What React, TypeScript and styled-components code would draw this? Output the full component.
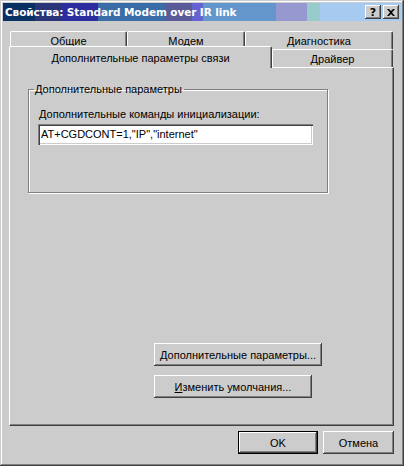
import styled, { createGlobalStyle } from "styled-components";

const GlobalStyle = createGlobalStyle`
  html, body {
    margin: 0;
    padding: 0;
    background: #cccccc;
  }
  * {
    box-sizing: border-box;
  }
`;

const FACE = "#cccccc";
const SHADOW = "#808080";
const DARK = "#404040";

const Window = styled.div`
  width: 404px;
  height: 466px;
  background: ${FACE};
  padding: 3px;
  display: flex;
  flex-direction: column;
  font-family: "Liberation Sans", Arial, sans-serif;
  font-size: 11px;
  color: #000;
  box-shadow: inset -1px -1px ${DARK}, inset 1px 1px ${FACE},
    inset -2px -2px ${SHADOW}, inset 2px 2px #ffffff;
`;

const TitleBar = styled.div`
  height: 18px;
  display: flex;
  align-items: center;
  padding: 0 2px 0 2px;
  background: linear-gradient(
    to right,
    #0a3062 0px 32px,
    #2a3478 32px 59px,
    #2c2c9e 59px 95px,
    #3a6ca8 95px 162px,
    #5a5a98 162px 189px,
    #6464d0 189px 200px,
    #6496cc 200px 273px,
    #9898d0 273px 304px,
    #98cccc 304px 317px,
    #a6caf0 317px
  );
`;

const Title = styled.span`
  flex: 1;
  color: #ffffff;
  font-family: "DejaVu Sans", Verdana, sans-serif;
  font-weight: bold;
  font-size: 10.5px;
  letter-spacing: -0.1px;
  white-space: nowrap;
`;

const CaptionButton = styled.button<{ $gap?: number }>`
  width: 16px;
  height: 14px;
  margin-left: ${(p) => p.$gap ?? 0}px;
  padding: 0;
  border: none;
  background: ${FACE};
  display: flex;
  align-items: center;
  justify-content: center;
  font-family: "DejaVu Sans", sans-serif;
  font-weight: bold;
  font-size: 11px;
  line-height: 1;
  color: #000;
  box-shadow: inset -1px -1px ${DARK}, inset 1px 1px #ffffff,
    inset -2px -2px ${SHADOW};
`;

const Body = styled.div`
  flex: 1;
  display: flex;
  flex-direction: column;
  padding: 10px 7px 0 6px;
`;

const TabRow = styled.div<{ $offset: number }>`
  display: flex;
  align-items: flex-end;
  height: 18px;
  padding-left: ${(p) => p.$offset}px;
`;

const Tab = styled.div<{ $width: number; $active?: boolean }>`
  width: ${(p) => p.$width}px;
  height: ${(p) => (p.$active ? 22 : 18)}px;
  margin-bottom: ${(p) => (p.$active ? -1 : 0)}px;
  ${(p) => (p.$active ? "position: relative; z-index: 2;" : "")}
  background: ${FACE};
  display: flex;
  align-items: center;
  justify-content: center;
  padding-top: ${(p) => (p.$active ? 0 : 1)}px;
  white-space: nowrap;
  border-top-left-radius: 2px;
  border-top-right-radius: 2px;
  border-top: 1px solid #ffffff;
  border-left: 1px solid #ffffff;
  border-right: 1px solid ${DARK};
  box-shadow: inset -1px 0 ${SHADOW};
`;

const Panel = styled.div`
  height: 359px;
  display: flex;
  flex-direction: column;
  padding: 15px 0 0 18px;
  background: ${FACE};
  border-top: 1px solid #ffffff;
  border-left: 1px solid #ffffff;
  border-right: 1px solid ${DARK};
  border-bottom: 1px solid ${DARK};
  box-shadow: inset -1px -1px ${SHADOW};
`;

const GroupBox = styled.fieldset`
  width: 300px;
  height: 110px;
  margin: 0;
  padding: 0 0 0 10px;
  border: 1px solid ${SHADOW};
  box-shadow: 1px 1px #ffffff, inset 1px 1px #ffffff;
`;

const Legend = styled.legend`
  padding: 0 2px 0 1px;
  margin-left: -5px;
  line-height: 12px;
`;

const FieldLabel = styled.div`
  margin-top: 12px;
  line-height: 14px;
`;

const TextField = styled.div`
  width: 275px;
  height: 21px;
  margin-top: 3px;
  margin-left: -1px;
  padding: 4px 0 0 3px;
  background: #ffffff;
  white-space: nowrap;
  box-shadow: inset 1px 1px ${SHADOW}, inset 2px 2px ${DARK},
    inset -1px -1px #ffffff, inset -2px -2px ${FACE};
`;

const ButtonStack = styled.div`
  margin-top: auto;
  margin-bottom: 27px;
  margin-left: 126px;
  display: flex;
  flex-direction: column;
  gap: 9px;
`;

const Button = styled.button<{ $width: number; $default?: boolean }>`
  width: ${(p) => p.$width}px;
  height: 23px;
  padding: 0;
  border: none;
  background: ${FACE};
  font-family: "Liberation Sans", Arial, sans-serif;
  font-size: 11px;
  color: #000;
  white-space: nowrap;
  box-shadow: ${(p) =>
    p.$default
      ? `inset -1px -1px #000, inset 1px 1px #000, inset -2px -2px ${DARK}, inset 2px 2px #ffffff, inset -3px -3px ${SHADOW}`
      : `inset -1px -1px ${DARK}, inset 1px 1px #ffffff, inset -2px -2px ${SHADOW}`};
  u {
    text-decoration: underline;
  }
`;

const Footer = styled.div`
  display: flex;
  justify-content: flex-end;
  gap: 5px;
  margin-top: 5px;
`;

function CloseGlyph() {
  return (
    <svg width="8" height="7" viewBox="0 0 8 7">
      <path d="M0 0h2l2 2 2-2h2L5 3.5 8 7H6L4 5 2 7H0l3-3.5z" fill="#000" />
    </svg>
  );
}

function App() {
  return (
    <>
      <GlobalStyle />
      <Window>
        <TitleBar>
          <Title>Свойства: Standard Modem over IR link</Title>
          <CaptionButton>?</CaptionButton>
          <CaptionButton $gap={2}>
            <CloseGlyph />
          </CaptionButton>
        </TitleBar>
        <Body>
          <TabRow $offset={1}>
            <Tab $width={117}>Общие</Tab>
            <Tab $width={118}>Модем</Tab>
            <Tab $width={148}>Диагностика</Tab>
          </TabRow>
          <TabRow $offset={0}>
            <Tab $width={263} $active>
              Дополнительные параметры связи
            </Tab>
            <Tab $width={121}>Драйвер</Tab>
          </TabRow>
          <Panel>
            <GroupBox>
              <Legend>Дополнительные параметры</Legend>
              <FieldLabel>
                <u>Д</u>ополнительные команды инициализации:
              </FieldLabel>
              <TextField>AT+CGDCONT=1,"IP","internet"</TextField>
            </GroupBox>
            <ButtonStack>
              <Button $width={168}>
                <u>Д</u>ополнительные параметры...
              </Button>
              <Button $width={158}>
                <u>И</u>зменить умолчания...
              </Button>
            </ButtonStack>
          </Panel>
          <Footer>
            <Button $width={80} $default>
              OK
            </Button>
            <Button $width={71}>Отмена</Button>
          </Footer>
        </Body>
      </Window>
    </>
  );
}

export default App;
